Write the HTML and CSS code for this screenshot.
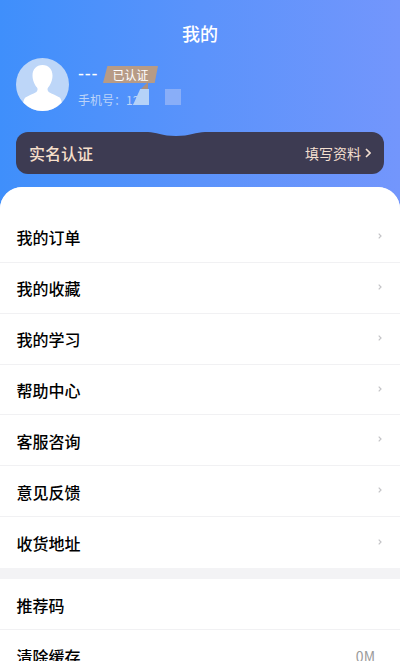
FILE: index.html
```html
<!DOCTYPE html>
<html lang="zh">
<head>
<meta charset="utf-8">
<title>我的</title>
<link rel="stylesheet" href="styles.css">
</head>
<body>
<div class="page">
  <header class="hero">
    <h1 class="title">我的</h1>
    <div class="profile">
      <svg class="avatar" viewBox="0 0 53 53">
        <circle cx="26.5" cy="26.5" r="26.5" fill="#bdd6f8"/>
        <path fill="#fff" d="M26.5 7c6.200 0 10 4.600 10 10.500 0 4.600-2 9.500-4.400 12.100-.9 1-.8 3.200.6 4.300 3.300 2.400 8.200 3.400 11 5.600 1.200 1.200 1.800 3.100 2 5A26.400 26.400 0 0 1 26.500 53 26.400 26.400 0 0 1 7.300 44.500c.2-1.900.9-3.800 2.100-5 2.700-2.200 7.700-3.200 11-5.600 1.400-1.100 1.500-3.300.6-4.300-2.400-2.600-4.500-7.500-4.500-12.100C16.500 11.600 20.300 7 26.500 7z"/>
      </svg>
      <div class="info">
        <div class="name-row">
          <span class="name">---</span>
          <span class="badge">已认证</span>
        </div>
        <div class="phone-row">
          <span class="phone">手机号：12</span>
          <span class="fold"></span>
          <span class="mask mask-a"></span>
          <span class="mask mask-b"></span>
        </div>
      </div>
    </div>
    <div class="verify">
      <span class="notch"></span>
      <span class="verify-title">实名认证</span>
      <span class="verify-action">填写资料
        <svg class="verify-arrow" viewBox="0 0 6 10"><path d="M1 1l4 4-4 4" fill="none" stroke="#f3dfd0" stroke-width="1.600"/></svg>
      </span>
    </div>
  </header>
  <main class="sheet">
    <ul class="group group-first">
      <li class="row"><span>我的订单</span><svg class="chev" viewBox="0 0 4 6"><path d="M.7.7L3 3 .7 5.300"/></svg></li>
      <li class="row"><span>我的收藏</span><svg class="chev" viewBox="0 0 4 6"><path d="M.7.7L3 3 .7 5.300"/></svg></li>
      <li class="row"><span>我的学习</span><svg class="chev" viewBox="0 0 4 6"><path d="M.7.7L3 3 .7 5.300"/></svg></li>
      <li class="row"><span>帮助中心</span><svg class="chev" viewBox="0 0 4 6"><path d="M.7.7L3 3 .7 5.300"/></svg></li>
      <li class="row"><span>客服咨询</span><svg class="chev" viewBox="0 0 4 6"><path d="M.7.7L3 3 .7 5.300"/></svg></li>
      <li class="row"><span>意见反馈</span><svg class="chev" viewBox="0 0 4 6"><path d="M.7.7L3 3 .7 5.300"/></svg></li>
      <li class="row"><span>收货地址</span><svg class="chev" viewBox="0 0 4 6"><path d="M.7.7L3 3 .7 5.300"/></svg></li>
    </ul>
    <ul class="group group-second">
      <li class="row row-low"><span>推荐码</span></li>
      <li class="row"><span>清除缓存</span><span class="value">0M</span></li>
    </ul>
  </main>
</div>
</body>
</html>
```
FILE: styles.css
```css
* { box-sizing: border-box; }
html, body { margin: 0; padding: 0; }
body {
  width: 400px;
  height: 661px;
  overflow: hidden;
  font-family: "Noto Sans CJK SC", "Noto Sans", sans-serif;
}
.page {
  height: 661px;
  overflow: hidden;
  background: linear-gradient(90deg, #3f8ffb 0%, #5b93fb 50%, #7396fc 100%);
}
.hero { padding: 0 16px; height: 187px; display: flow-root; }
.title {
  margin: 21px 0 0;
  height: 24px;
  line-height: 24px;
  text-align: center;
  font-size: 18px;
  font-weight: 500;
  color: #fff;
}
.profile { display: flex; align-items: flex-start; margin-top: 13px; gap: 9px; }
.avatar { width: 53px; height: 53px; flex: none; }
.info { display: flex; flex-direction: column; gap: 6px; padding-top: 6px; }
.name-row { display: flex; align-items: center; gap: 5px; height: 21px; }
.name {
  width: 20px;
  font-family: "Liberation Sans", sans-serif;
  font-size: 18px;
  font-weight: 400;
  letter-spacing: 0.8px;
  white-space: nowrap;
  color: #fff;
}
.badge {
  width: 55px;
  height: 17px;
  line-height: 17px;
  text-align: center;
  font-size: 12px;
  color: #fff;
  background: #b79b86;
  clip-path: polygon(8% 0, 100% 0, 94% 100%, 0 100%);
}
.phone-row { display: flex; align-items: center; height: 16px; position: relative; }
.phone { font-size: 12px; color: #bcd4f8; white-space: nowrap; }
.fold {
  position: absolute;
  left: 62px;
  top: -9px;
  width: 8px;
  height: 8px;
  background: #ad8f7d;
  clip-path: polygon(0 100%, 100% 0, 100% 100%);
}
.mask { position: absolute; top: -2px; height: 16px; }
.mask-a { left: 55px; width: 16px; background: #b5d2f8; clip-path: polygon(0 100%, 45% 0, 100% 0, 100% 100%); }
.mask-b { left: 87px; width: 16px; background: #89aef8; }
.verify {
  position: relative;
  margin-top: 21px;
  height: 42px;
  border-radius: 12px;
  background: #3d3b52;
  display: flex;
  align-items: center;
  justify-content: space-between;
  padding: 0 13px;
}
.notch {
  position: absolute;
  left: 132px;
  top: 0;
  width: 57px;
  height: 4px;
  background: linear-gradient(90deg, #3f8ffb 0, #5b93fb 200px, #7396fc 400px) fixed;
  clip-path: path("M0 0C8 0 14 4 28 4C42 4 48 0 57 0Z");
}
.verify-title { font-size: 16px; font-weight: 500; color: #f6dfca; }
.verify-action { display: flex; align-items: center; gap: 4px; font-size: 14px; color: #f3dfd0; }
.verify-arrow { width: 6px; height: 10px; }
.sheet {
  background: #f3f3f5;
  border-radius: 22px 22px 0 0;
  height: 474px;
  overflow: hidden;
}
.group { list-style: none; margin: 0; padding: 0; background: #fff; }
.group-first { padding-top: 25px; }
.group-second { margin-top: 11px; }
.row {
  height: 50.86px;
  display: flex;
  align-items: center;
  justify-content: space-between;
  padding: 1px 18px 0 16.500px;
  font-size: 16px;
  font-weight: 500;
  color: #000;
  border-bottom: 1px solid #f1f1f3;
}
.row-low { padding-top: 3px; }
.group .row:last-child { border-bottom: 0; }
.chev { width: 4px; height: 6px; margin-top: -3px; }
.chev path { fill: none; stroke: #c4c4c7; stroke-width: 1.200; }
.value { font-size: 14px; font-weight: 400; color: #9a9a9a; margin-right: 7px; }
```
